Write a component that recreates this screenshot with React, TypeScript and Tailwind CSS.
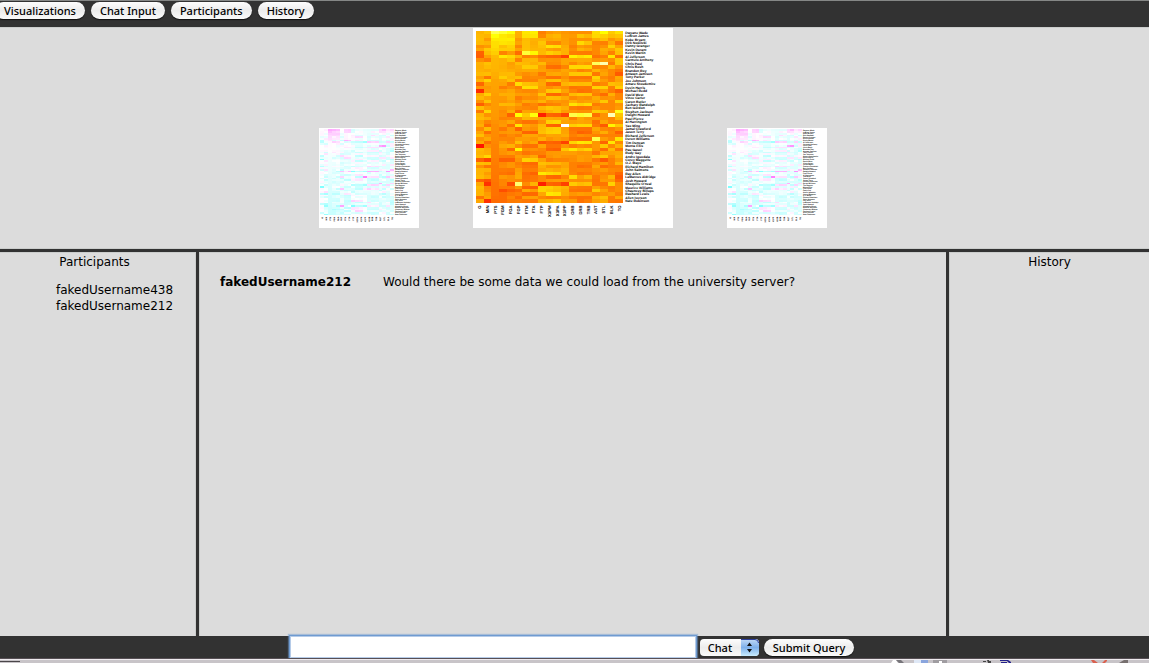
import React from "react";

const COLUMNS = [
  "G", "MIN", "PTS", "FGM", "FGA", "FGP", "FTM", "FTA", "FTP", "X3PM",
  "X3PA", "X3PP", "ORB", "DRB", "TRB", "AST", "STL", "BLK", "TO",
];

type Player = [string, number[]];

const PLAYERS: Player[] = [
  ["Dwyane Wade", [79, 38.6, 30.2, 10.8, 22, 0.491, 7.5, 9.8, 0.765, 1.1, 3.5, 0.317, 1.1, 3.9, 5, 7.5, 2.2, 1.3, 3.4]],
  ["LeBron James", [81, 37.7, 28.4, 9.7, 19.9, 0.489, 7.3, 9.4, 0.78, 1.6, 4.7, 0.344, 1.3, 6.3, 7.6, 7.2, 1.7, 1.1, 3]],
  ["Kobe Bryant", [82, 36.2, 26.8, 9.8, 20.9, 0.467, 5.9, 6.9, 0.856, 1.4, 4.1, 0.351, 1.1, 4.1, 5.2, 4.9, 1.5, 0.5, 2.6]],
  ["Dirk Nowitzki", [81, 37.7, 25.9, 9.6, 20, 0.479, 6, 6.7, 0.89, 0.8, 2.1, 0.359, 1.1, 7.3, 8.4, 2.4, 0.8, 0.8, 1.9]],
  ["Danny Granger", [67, 36.2, 25.8, 8.5, 19.1, 0.447, 6, 6.9, 0.878, 2.7, 6.7, 0.404, 0.7, 4.4, 5.1, 2.7, 1, 1.4, 2.5]],
  ["Kevin Durant", [74, 39, 25.3, 8.9, 18.8, 0.476, 6.1, 7.1, 0.863, 1.3, 3.1, 0.422, 1, 5.5, 6.5, 2.8, 1.3, 0.7, 3]],
  ["Kevin Martin", [51, 38.2, 24.6, 6.7, 15.9, 0.42, 9, 10.3, 0.867, 2.3, 5.4, 0.415, 0.6, 3, 3.6, 2.7, 1.2, 0.2, 2.9]],
  ["Al Jefferson", [50, 36.6, 23.1, 9.7, 19.5, 0.497, 3.7, 5, 0.738, 0, 0.1, 0, 3.4, 7.5, 11, 1.6, 0.8, 1.7, 1.8]],
  ["Carmelo Anthony", [66, 34.5, 22.8, 8.1, 18.3, 0.443, 5.6, 7.1, 0.793, 1, 2.6, 0.371, 1.6, 5.2, 6.8, 3.4, 1.1, 0.4, 3]],
  ["Chris Paul", [78, 38.5, 22.8, 8.1, 16.1, 0.503, 5.8, 6.7, 0.868, 0.8, 2.3, 0.364, 0.9, 4.7, 5.5, 11, 2.8, 0.1, 3]],
  ["Chris Bosh", [77, 38.1, 22.7, 8, 16.4, 0.487, 6.5, 8, 0.817, 0.2, 0.6, 0.245, 2.8, 7.2, 10, 2.5, 0.9, 1, 2.3]],
  ["Brandon Roy", [78, 37.2, 22.6, 8.1, 16.9, 0.48, 5.3, 6.5, 0.824, 1.1, 2.8, 0.377, 1.3, 3.4, 4.7, 5.1, 1.1, 0.3, 1.9]],
  ["Antawn Jamison", [81, 38.2, 22.2, 8.3, 17.8, 0.468, 4.2, 5.6, 0.754, 1.4, 3.9, 0.351, 2.4, 6.5, 8.9, 1.9, 1.2, 0.3, 1.5]],
  ["Tony Parker", [72, 34.1, 22, 8.9, 17.5, 0.506, 3.9, 5, 0.782, 0.3, 0.9, 0.292, 0.4, 2.7, 3.1, 6.9, 0.9, 0.1, 2.6]],
  ["Joe Johnson", [79, 39.5, 21.4, 7.8, 18, 0.437, 3.8, 4.6, 0.826, 1.9, 5.2, 0.36, 0.8, 3.6, 4.4, 5.8, 1.1, 0.2, 2.5]],
  ["Amare Stoudemire", [53, 36.8, 21.4, 7.6, 14.1, 0.539, 6.1, 7.3, 0.835, 0.1, 0.1, 0.429, 2.2, 5.9, 8.1, 2, 0.9, 1.1, 2.8]],
  ["Devin Harris", [69, 36.1, 21.3, 6.6, 15.1, 0.438, 7.2, 8.8, 0.82, 0.9, 3.2, 0.291, 0.4, 2.9, 3.3, 6.9, 1.7, 0.2, 3.1]],
  ["Michael Redd", [33, 36.4, 21.2, 7.5, 16.6, 0.455, 4, 4.9, 0.814, 2.1, 5.8, 0.366, 0.7, 2.5, 3.2, 2.7, 1.1, 0.1, 1.6]],
  ["David West", [76, 39.3, 21, 8, 17, 0.472, 4.8, 5.5, 0.884, 0.1, 0.3, 0.24, 2.1, 6.4, 8.5, 2.3, 0.6, 0.9, 2.1]],
  ["Vince Carter", [80, 36.8, 20.8, 7.4, 16.8, 0.437, 4.2, 5.1, 0.817, 1.9, 4.9, 0.385, 0.9, 4.2, 5.1, 4.7, 1, 0.5, 2.1]],
  ["Caron Butler", [67, 38.6, 20.8, 7.3, 16.2, 0.453, 5.1, 6, 0.858, 1, 3.1, 0.31, 1.8, 4.4, 6.2, 4.3, 1.6, 0.3, 3.1]],
  ["Zachary Randolph", [50, 35.1, 20.8, 8.3, 17.5, 0.475, 3.6, 4.9, 0.734, 0.6, 1.9, 0.33, 3.1, 6.9, 10.1, 2.1, 0.9, 0.3, 2.3]],
  ["Ben Gordon", [82, 36.6, 20.7, 7.3, 16, 0.455, 4, 4.7, 0.864, 2.1, 5.1, 0.41, 0.6, 2.8, 3.5, 3.4, 0.9, 0.3, 2.4]],
  ["Stephen Jackson", [59, 39.7, 20.7, 7, 16.9, 0.414, 5, 6, 0.826, 1.7, 5.2, 0.338, 1.2, 3.9, 5.1, 6.5, 1.5, 0.5, 3.9]],
  ["Dwight Howard", [79, 35.7, 20.6, 7.1, 12.4, 0.572, 6.4, 10.7, 0.594, 0, 0, 0, 4.3, 9.6, 13.8, 1.4, 1, 2.9, 3]],
  ["Paul Pierce", [81, 37.4, 20.5, 6.7, 14.6, 0.457, 5.7, 6.8, 0.83, 1.5, 3.8, 0.391, 0.7, 5, 5.6, 3.6, 1, 0.3, 2.8]],
  ["Al Harrington", [73, 34.9, 20.1, 7.3, 16.6, 0.439, 3.2, 4, 0.793, 2.3, 6.4, 0.364, 1.4, 4.9, 6.2, 1.4, 1.2, 0.3, 2.2]],
  ["Yao Ming", [77, 33.6, 19.7, 7.4, 13.4, 0.548, 4.9, 5.7, 0.866, 0, 0, 1, 2.6, 7.2, 9.9, 1.8, 0.4, 1.9, 3]],
  ["Jamal Crawford", [65, 38.1, 19.7, 6.4, 15.7, 0.41, 4.6, 5.3, 0.872, 2.2, 6.1, 0.36, 0.4, 2.6, 3, 4.4, 0.9, 0.2, 2.3]],
  ["Jason Terry", [74, 33.6, 19.6, 7.3, 15.8, 0.463, 2.7, 3, 0.88, 2.3, 6.2, 0.366, 0.5, 1.9, 2.4, 3.4, 1.3, 0.3, 1.6]],
  ["Richard Jefferson", [82, 35.9, 19.6, 6.5, 14.9, 0.439, 5.1, 6.3, 0.805, 1.4, 3.6, 0.397, 0.7, 3.9, 4.6, 2.4, 0.8, 0.2, 2]],
  ["Deron Williams", [68, 36.9, 19.4, 6.8, 14.5, 0.471, 4.8, 5.6, 0.849, 1, 3.3, 0.31, 0.4, 2.5, 2.9, 10.7, 1.1, 0.3, 3.4]],
  ["Tim Duncan", [75, 33.7, 19.3, 7.4, 14.8, 0.504, 4.5, 6.4, 0.692, 0, 0, 0, 2.7, 8, 10.7, 3.5, 0.5, 1.7, 2.2]],
  ["Monta Ellis", [25, 35.6, 19, 7.8, 17.2, 0.451, 3.1, 3.8, 0.83, 0.3, 1, 0.308, 0.6, 3.8, 4.3, 3.7, 1.6, 0.3, 2.7]],
  ["Pau Gasol", [81, 37.1, 18.9, 7.3, 12.9, 0.567, 4.2, 5.4, 0.781, 0, 0, 0.5, 3.2, 6.4, 9.6, 3.5, 0.6, 1, 1.9]],
  ["Rudy Gay", [79, 37.3, 18.9, 7.2, 16, 0.453, 3.3, 4.4, 0.767, 1.1, 3.1, 0.351, 1.4, 4.2, 5.5, 1.7, 1.2, 0.7, 2.6]],
  ["Andre Iguodala", [82, 39.8, 18.8, 6.6, 14, 0.473, 4.6, 6.4, 0.724, 1, 3.2, 0.307, 1.1, 4.6, 5.7, 5.3, 1.6, 0.4, 2.7]],
  ["Corey Maggette", [51, 31.1, 18.6, 5.7, 12.4, 0.461, 6.7, 8.1, 0.824, 0.5, 1.9, 0.253, 1, 4.6, 5.5, 1.8, 0.4, 0.2, 2.4]],
  ["O.J. Mayo", [82, 38, 18.5, 6.9, 15.6, 0.438, 3, 3.4, 0.879, 1.8, 4.6, 0.384, 0.7, 3.1, 3.8, 3.2, 1.1, 0.2, 2.8]],
  ["Richard Hamilton", [67, 34, 18.3, 7, 15.6, 0.447, 3.3, 3.9, 0.848, 1, 2.8, 0.368, 0.7, 2.4, 3.1, 4.4, 0.6, 0.1, 2]],
  ["John Salmons", [79, 37.5, 18.3, 6.5, 13.8, 0.472, 3.6, 4.4, 0.83, 1.6, 3.8, 0.417, 0.7, 3.5, 4.2, 3.2, 1.1, 0.3, 2.1]],
  ["Ray Allen", [79, 36.3, 18.2, 6.3, 13.2, 0.48, 3, 3.2, 0.952, 2.5, 6.2, 0.409, 0.8, 2.7, 3.5, 2.8, 0.9, 0.2, 1.7]],
  ["LaMarcus Aldridge", [81, 37.1, 18.1, 7.4, 15.3, 0.484, 3.2, 4.1, 0.781, 0.1, 0.3, 0.25, 2.9, 4.6, 7.5, 1.9, 1, 1, 1.5]],
  ["Josh Howard", [52, 31.9, 18, 6.8, 15.1, 0.451, 3.3, 4.2, 0.782, 1.1, 3.2, 0.345, 1.1, 3.9, 5.1, 1.6, 1.1, 0.6, 1.7]],
  ["Shaquille O'neal", [75, 30.1, 17.8, 6.8, 11.2, 0.609, 4.1, 6.9, 0.595, 0, 0, 0, 2.5, 5.9, 8.4, 1.7, 0.7, 1.4, 2.2]],
  ["Maurice Williams", [81, 35, 17.8, 6.5, 13.9, 0.467, 2.6, 2.8, 0.912, 2.3, 5.2, 0.436, 0.6, 2.9, 3.4, 4.1, 0.9, 0.1, 2.2]],
  ["Chauncey Billups", [79, 35.3, 17.7, 5.2, 12.4, 0.418, 5.3, 5.8, 0.913, 2.1, 5, 0.408, 0.4, 2.6, 3, 6.4, 1.2, 0.2, 2.2]],
  ["Rashard Lewis", [79, 36.2, 17.7, 6.1, 13.8, 0.439, 2.8, 3.4, 0.836, 2.8, 7, 0.397, 1.2, 4.6, 5.7, 2.6, 1, 0.6, 2]],
  ["Allen Iverson", [57, 36.7, 17.5, 6.1, 14.6, 0.417, 4.8, 6.1, 0.781, 0.5, 1.7, 0.283, 0.5, 2.5, 3, 5, 1.5, 0.1, 2.6]],
  ["Nate Robinson", [74, 29.9, 17.2, 6.1, 13.9, 0.437, 3.4, 4, 0.841, 1.7, 5.2, 0.325, 1.3, 2.6, 3.9, 4.1, 1.3, 0.1, 1.9]],
];

// Standardises every column, then rescales all cells to the range 0..1.
function normalise(): number[][] {
  const stats = COLUMNS.map((_, c) => {
    const values = PLAYERS.map(([, v]) => v[c]);
    const mean = values.reduce((a, b) => a + b, 0) / values.length;
    const variance =
      values.reduce((a, b) => a + (b - mean) ** 2, 0) / (values.length - 1);
    return { mean, sd: Math.sqrt(variance) };
  });
  const z = PLAYERS.map(([, v]) =>
    v.map((x, c) => (x - stats[c].mean) / stats[c].sd),
  );
  const all = z.flat();
  const min = Math.min(...all);
  const max = Math.max(...all);
  return z.map((row) => row.map((x) => (x - min) / (max - min)));
}

const CELLS = normalise();

function heat(t: number): string {
  if (t < 0.75) return `rgb(255,${Math.round(20 + (t / 0.75) * 235)},0)`;
  return `rgb(255,255,${Math.round(((t - 0.75) / 0.25) * 255)})`;
}

function cyanMagenta(t: number): string {
  const v = Math.round(255 - Math.abs(t - 0.5) * 255);
  return t < 0.5 ? `rgb(${v},255,255)` : `rgb(255,${v},255)`;
}

function Heatmap({
  palette,
  label,
  className,
}: {
  palette: (t: number) => string;
  label: string;
  className: string;
}) {
  const left = 28;
  const top = 28;
  const cellW = 1472 / COLUMNS.length;
  const cellH = 1720 / PLAYERS.length;
  return (
    <svg
      viewBox="0 0 2000 2000"
      role="img"
      aria-label={label}
      className={className}
      textRendering="geometricPrecision"
    >
      <g shapeRendering="crispEdges">
        {CELLS.map((row, r) =>
          row.map((t, c) => (
            <rect
              key={`${r}-${c}`}
              x={left + c * cellW}
              y={top + r * cellH}
              width={cellW}
              height={cellH}
              fill={palette(t)}
            />
          )),
        )}
      </g>
      <g fontFamily="Liberation Sans, Arial, sans-serif" fontWeight="700" fill="#000">
        {PLAYERS.map(([name], r) => (
          <text key={name} x={1522} y={top + (r + 0.5) * cellH + 12} fontSize="34">
            {name}
          </text>
        ))}
        {COLUMNS.map((name, c) => (
          <text
            key={name}
            transform={`translate(${left + (c + 0.5) * cellW + 15} 1775) rotate(-90)`}
            textAnchor="end"
            fontSize="42"
          >
            {name}
          </text>
        ))}
      </g>
    </svg>
  );
}

const PILL =
  "rounded-full bg-linear-to-b from-[#fdfdfd] via-[#ececec] to-[#fafafa] text-black shadow-[0_1px_1px_#111]";

const TABS = ["Visualizations", "Chat Input", "Participants", "History"];
const USERS = ["fakedUsername438", "fakedUsername212"];

function DockStrip() {
  return (
    <div className="flex h-[5px] items-end justify-between border-t border-[#575055] bg-[#c8c4c8] shadow-[inset_0_1px_0_#efebef]">
      <div className="mb-px h-px w-5 bg-[#4a4649]" />
      <svg width="269" height="3" viewBox="0 1 269 3" aria-hidden="true">
        <path d="M11 4l2-3h3l2 3z" fill="#fff" />
        <path d="M16 1h5l3 3h-5z" fill="#77757a" />
        <rect x="34" y="1" width="7" height="3" fill="#dfe8f6" />
        <rect x="41" y="1" width="7" height="3" fill="#8aa5dd" />
        <rect x="53" y="1" width="14" height="3" fill="#a09da1" />
        <rect x="59" y="2" width="3" height="2" fill="#fff" />
        <path d="M103 2h3v1h-3zM107 1h2v1h2v2h-3z" fill="#444" />
        <path d="M120 1h8l3 2v1h-2l-2-2h-7zM121 3h6v1h-6z" fill="#22208a" />
        <path d="M211 1h3l4 3h-5zM222 4l3-3h2v1l-2 2z" fill="#d9604f" />
        <path d="M239 4l5-3h4v3z" fill="#77706f" />
      </svg>
    </div>
  );
}

export default function App() {
  return (
    <div className="flex min-h-screen flex-col bg-[#323232] font-['DejaVu_Sans',Verdana,sans-serif] text-xs leading-4 text-black">
      <nav className="flex h-[27px] items-start gap-[6px] border-t border-[#858786] pt-px font-['Noto_Sans','Lucida_Grande',sans-serif] text-[11px] font-medium">
        {TABS.map((tab) => (
          <button
            key={tab}
            type="button"
            className={`h-[17px] px-[9px] leading-[17px] first:-ml-[5px] ${PILL}`}
          >
            {tab}
          </button>
        ))}
      </nav>

      <section
        aria-label="Visualizations"
        className="flex items-end justify-center gap-[54px] border-y border-[#cbcdcc] bg-[#dcdcdc] pr-[3px] pb-5"
      >
        <Heatmap palette={cyanMagenta} label="Player statistics, previous" className="size-[100px] bg-white" />
        <Heatmap palette={heat} label="Player statistics, current" className="size-[200px] bg-white" />
        <Heatmap palette={cyanMagenta} label="Player statistics, next" className="size-[100px] bg-white" />
      </section>

      <main className="mt-[3px] flex grow gap-[3px]">
        <aside className="w-[196px] border-t border-r border-[#cbcdcc] bg-[#dcdcdc] pt-px pr-1.5 text-center">
          <h2>Participants</h2>
          <ul className="mt-3 pl-10">
            {USERS.map((user) => (
              <li key={user}>{user}</li>
            ))}
          </ul>
        </aside>
        <section aria-label="Chat" className="grow border-t border-l border-[#cbcdcc] bg-[#dcdcdc] px-5 pt-[21px]">
          <p className="flex gap-8">
            <strong>fakedUsername212</strong>
            <span>Would there be some data we could load from the university server?</span>
          </p>
        </section>
        <aside className="w-[200px] border-t border-l border-[#cbcdcc] bg-[#dcdcdc] pt-px text-center">
          <h2>History</h2>
        </aside>
      </main>

      <form
        onSubmit={(e) => e.preventDefault()}
        className="flex h-[22px] items-center justify-center gap-[5px] pr-1 font-['Noto_Sans','Lucida_Grande',sans-serif] text-[11px] font-medium"
      >
        <input
          type="text"
          aria-label="Message"
          className="h-5 w-[404px] bg-white px-1 shadow-[0_0_0_1px_#b5cbe8,0_0_0_2px_#6f9bd1,0_0_1px_3px_#6f9bd180] outline-none"
        />
        <span className="relative flex">
          <select
            aria-label="Mode"
            className="h-[17px] w-[59px] appearance-none rounded-[4px] bg-linear-to-b from-[#fdfdfd] via-[#ececec] to-[#fafafa] pl-2 leading-[17px] outline-none"
          >
            <option>Chat</option>
            <option>Query</option>
          </select>
          <svg
            className="pointer-events-none absolute top-0 right-0"
            width="18"
            height="17"
            viewBox="0 0 18 17"
            aria-hidden="true"
          >
            <defs>
              <linearGradient id="stepper" x1="0" y1="0" x2="0" y2="1">
                <stop offset="0" stopColor="#c3dbf6" />
                <stop offset="0.5" stopColor="#7eb0ea" />
                <stop offset="1" stopColor="#c9ecff" />
              </linearGradient>
            </defs>
            <path d="M0 0h14a4 4 0 0 1 4 4v9a4 4 0 0 1-4 4H0z" fill="url(#stepper)" />
            <path d="M0 .5h14a3.500 3.500 0 0 1 3.500 3.500" fill="none" stroke="#2d3f9c" />
            <path d="M8.500 3.500l2.500 3.500h-5zM8.500 13.500l2.500-3.500h-5z" fill="#111" />
          </svg>
        </span>
        <button type="submit" className={`h-[17px] px-[9px] leading-[17px] ${PILL}`}>
          Submit Query
        </button>
      </form>
      <DockStrip />
    </div>
  );
}
